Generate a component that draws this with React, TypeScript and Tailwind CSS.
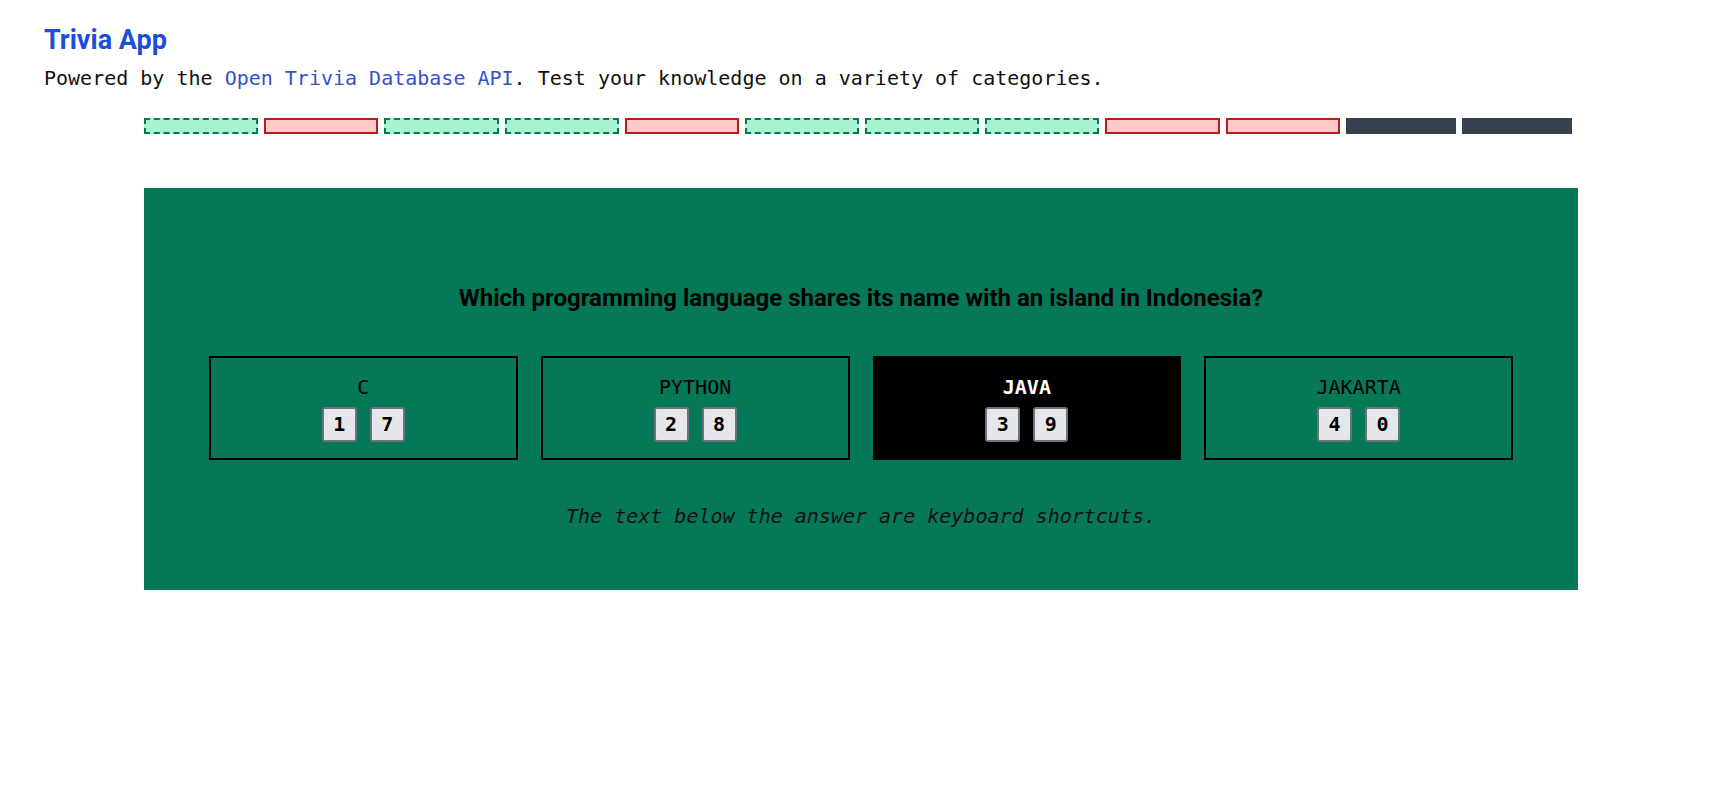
import React from 'react';

const mono = "font-['DejaVu_Sans_Mono',monospace]";

const progress = [
  'correct',
  'wrong',
  'correct',
  'correct',
  'wrong',
  'correct',
  'correct',
  'correct',
  'wrong',
  'wrong',
  'pending',
  'pending',
];

const answers = [
  { label: 'C', keys: ['1', '7'] },
  { label: 'PYTHON', keys: ['2', '8'] },
  { label: 'JAVA', keys: ['3', '9'], selected: true },
  { label: 'JAKARTA', keys: ['4', '0'] },
];

const ProgressBar = ({ status }: { status: string }) => {
  if (status === 'correct') {
    return (
      <div className="h-4 flex-1 mr-[6px] border-2 border-dashed border-[#047857] bg-[#a7f3d0]" />
    );
  }
  if (status === 'wrong') {
    return (
      <div className="h-4 flex-1 mr-[6px] border-2 border-[#b91c1c] bg-[#fecaca]" />
    );
  }
  return <div className="h-4 flex-1 mr-[6px] bg-[#374151]" />;
};

const KeyHint = ({ k }: { k: string }) => (
  <span
    className={`flex h-[35px] w-[35px] items-center justify-center rounded-[3px] border-2 border-[#6b7280] bg-[#e5e7eb] text-[20px] font-bold text-black ${mono}`}
  >
    {k}
  </span>
);

const AnswerButton = ({ item }: any) => (
  <button
    type="button"
    className={`flex h-[104px] flex-1 flex-col items-center justify-center gap-[8px] border-2 ${
      item.selected ? 'border-black bg-black text-white' : 'border-black text-black'
    }`}
  >
    <span className={`text-[20px] leading-6 ${item.selected ? 'font-bold' : ''} ${mono}`}>
      {item.label}
    </span>
    <span className="flex gap-[13px]">
      {item.keys.map((k: string) => (
        <KeyHint key={k} k={k} />
      ))}
    </span>
  </button>
);

const App = () => {
  return (
    <div className="min-h-[808px] bg-white px-[44px] pt-[24px]">
      {/* Header */}
      <h1 className="font-['Roboto',sans-serif] text-[27px] font-bold leading-8 text-[#1d4ed8]">
        Trivia App
      </h1>
      <p className={`mt-[8px] text-[20px] leading-7 text-[#111] ${mono}`}>
        Powered by the{' '}
        <a href="#" className="text-[#3452c9]">
          Open Trivia Database API
        </a>
        . Test your knowledge on a variety of categories.
      </p>

      {/* Progress */}
      <div className="mx-auto mt-[26px] flex w-[1434px]">
        {progress.map((s, i) => (
          <ProgressBar key={i} status={s} />
        ))}
      </div>

      {/* Question card */}
      <div className="mx-auto mt-[54px] flex w-[1434px] flex-col items-center bg-[#047857] px-[65px] pb-[60px] pt-[94px]">
        <h2 className="font-['Roboto',sans-serif] text-[24px] font-bold leading-8 text-black">
          Which programming language shares its name with an island in Indonesia?
        </h2>
        <div className="mt-[42px] flex w-full gap-[23px]">
          {answers.map((a) => (
            <AnswerButton key={a.label} item={a} />
          ))}
        </div>
        <p className={`mt-[42px] text-[20px] italic leading-7 text-[#111] ${mono}`}>
          The text below the answer are keyboard shortcuts.
        </p>
      </div>
    </div>
  );
};

export default App;
